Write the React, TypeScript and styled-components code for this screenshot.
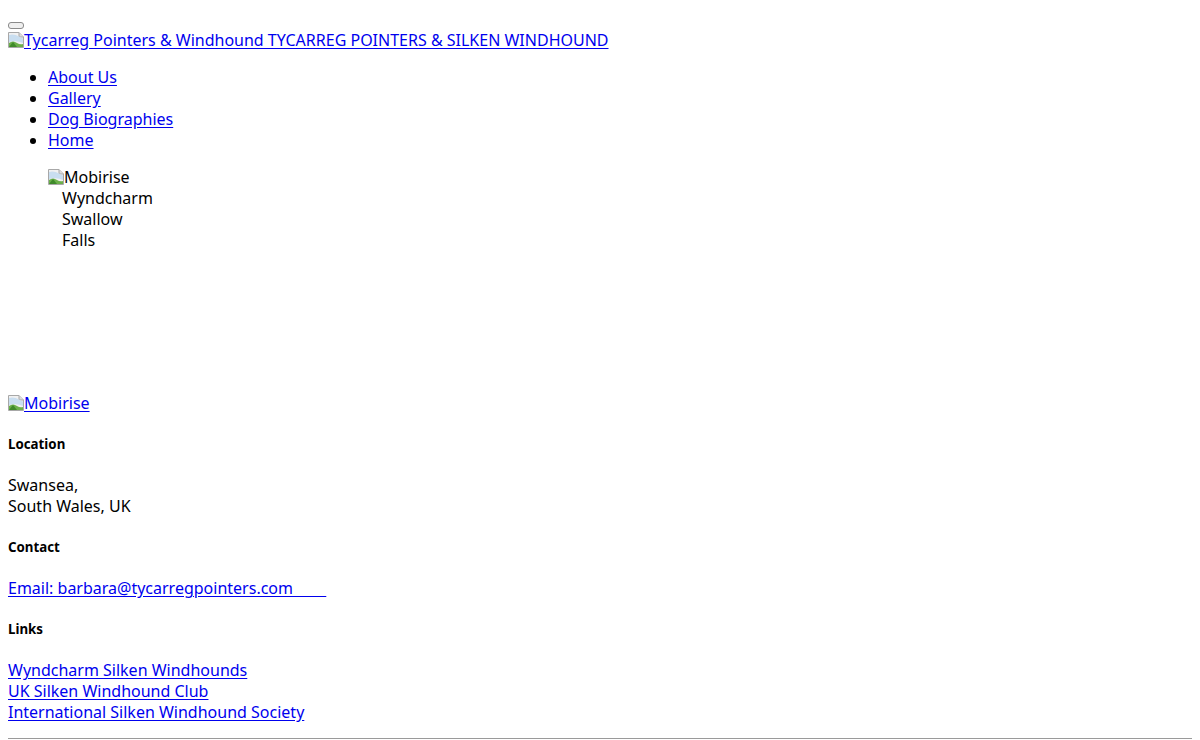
import React from "react";
import styled, { createGlobalStyle } from "styled-components";

const Global = createGlobalStyle`
  html, body { background: #fff; }
  body {
    margin: 8px;
    font-family: "Noto Sans", "Open Sans", sans-serif;
    font-size: 16px;
    line-height: 21px;
    color: #000;
  }
`;

const Page = styled.div`
  display: flex;
  flex-direction: column;
`;

const Header = styled.nav`
  display: flex;
  flex-direction: column;
  padding-top: 14px;
`;

const Toggler = styled.button`
  display: block;
  width: 16px;
  height: 7px;
  padding: 0;
  margin: 0 0 1px 0;
  border: 1px solid #8a8a8a;
  border-radius: 3px;
  background: #efefef;
`;

const Link = styled.a`
  color: #0000ee;
  text-decoration: underline;
  text-underline-offset: 2px;
`;

const BrokenImg = styled.span`
  display: inline-block;
  width: 16px;
  height: 16px;
  vertical-align: -2px;
  svg { display: block; }
`;

const NavList = styled.ul`
  margin: 16px 0;
  padding-left: 40px;
  list-style: disc;
`;

const Slide = styled.div`
  padding-left: 40px;
  margin-bottom: 142px;
`;

const Caption = styled.div`
  width: 70px;
  padding-left: 14px;
`;

const Footer = styled.footer`
  display: flex;
  flex-direction: column;
`;

const Heading = styled.h5`
  font-size: 13.3px;
  line-height: 18px;
  font-weight: 700;
  margin: 21.3px 0 21.7px;
`;

const Para = styled.p`
  margin: 0;
`;

const LinkStack = styled.div`
  display: flex;
  flex-direction: column;
  align-items: flex-start;
`;

const Rule = styled.hr`
  margin: 15px 0 0;
  border: 0;
  border-top: 1px solid #9a9a9a;
  height: 1px;
`;

function ImgIcon() {
  return (
    <BrokenImg aria-hidden>
      <svg width="16" height="16" viewBox="0 0 16 16">
        <path d="M0.5 0.5 H11 L15.5 5 V15.5 H0.5 Z" fill="#f1f1f1" stroke="#a8a8a8" />
        <path d="M11 0.5 V5 H15.5" fill="#dcdcdc" stroke="#a8a8a8" />
        <path d="M1 3 Q6 1.5 11 4.5 L15 6.5 V11 Q9 8 1 10 Z" fill="#c9def0" />
        <path d="M1 15 V11 Q5 8 9 11 Q12 13 15 12 V15 Z" fill="#6cb04a" />
        <path d="M1 15 L5 10 L9 15 Z" fill="#3f8a2a" />
      </svg>
    </BrokenImg>
  );
}

export default function App() {
  return (
    <Page>
      <Global />
      <Header>
        <Toggler type="button" aria-label="menu" />
        <div>
          <Link href="#">
            <ImgIcon />
            Tycarreg Pointers &amp; Windhound TYCARREG POINTERS &amp; SILKEN WINDHOUND
          </Link>
        </div>
        <NavList>
          <li><Link href="#">About Us</Link></li>
          <li><Link href="#">Gallery</Link></li>
          <li><Link href="#">Dog Biographies</Link></li>
          <li><Link href="#">Home</Link></li>
        </NavList>
      </Header>
      <Slide>
        <div>
          <ImgIcon />
          Mobirise
        </div>
        <Caption>Wyndcharm Swallow Falls</Caption>
      </Slide>
      <Footer>
        <div>
          <Link href="#">
            <ImgIcon />
            Mobirise
          </Link>
        </div>
        <Heading>Location</Heading>
        <Para>
          Swansea,
          <br />
          South Wales, UK
        </Para>
        <Heading>Contact</Heading>
        <Para>
          <Link href="#">
            Email: barbara@tycarregpointers.com&nbsp;&nbsp;&nbsp;&nbsp;&nbsp;&nbsp;&nbsp;&nbsp;
          </Link>
        </Para>
        <Heading>Links</Heading>
        <LinkStack>
          <Link href="#">Wyndcharm Silken Windhounds</Link>
          <Link href="#">UK Silken Windhound Club</Link>
          <Link href="#">International Silken Windhound Society</Link>
        </LinkStack>
        <Rule />
      </Footer>
    </Page>
  );
}
